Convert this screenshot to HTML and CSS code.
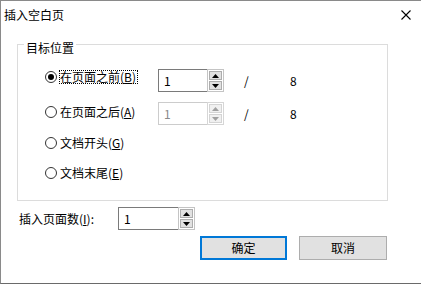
FILE: index.html
```html
<!DOCTYPE html>
<html lang="zh-CN">
<head>
<meta charset="utf-8">
<title>插入空白页</title>
<link rel="stylesheet" href="styles.css">
</head>
<body>
<div class="window">
  <div class="titlebar">
    <span class="title">插入空白页</span>
    <svg class="close" width="10" height="10" viewBox="0 0 10 10"><path d="M0.5 0.5L9.5 9.5M9.5 0.5L0.5 9.5" stroke="#000" stroke-width="1.1" fill="none"/></svg>
  </div>
  <div class="content">
    <div class="group">
      <span class="legend">目标位置</span>
      <div class="row row1">
        <label class="radio">
          <svg class="dot" width="12" height="12" viewBox="0 0 12 12"><circle cx="6" cy="6" r="5.5" fill="#fff" stroke="#333"/><circle cx="6" cy="6" r="3" fill="#000"/></svg>
          <span class="rtext focus">在页面之前(<u>B</u>)</span>
        </label>
        <div class="spin">
          <div class="spin-field">1</div>
          <div class="spin-btns">
            <div class="sbtn"><svg width="7" height="4" viewBox="0 0 7 4"><path d="M3.5 0L7 4H0z"/></svg></div>
            <div class="sbtn"><svg width="7" height="4" viewBox="0 0 7 4"><path d="M0 0H7L3.5 4z"/></svg></div>
          </div>
        </div>
        <span class="slash">/</span>
        <span class="total">8</span>
      </div>
      <div class="row row2">
        <label class="radio">
          <svg class="dot" width="12" height="12" viewBox="0 0 12 12"><circle cx="6" cy="6" r="5.5" fill="#fff" stroke="#333"/></svg>
          <span class="rtext">在页面之后(<u>A</u>)</span>
        </label>
        <div class="spin disabled">
          <div class="spin-field">1</div>
          <div class="spin-btns">
            <div class="sbtn"><svg width="7" height="4" viewBox="0 0 7 4"><path d="M3.5 0L7 4H0z"/></svg></div>
            <div class="sbtn"><svg width="7" height="4" viewBox="0 0 7 4"><path d="M0 0H7L3.5 4z"/></svg></div>
          </div>
        </div>
        <span class="slash">/</span>
        <span class="total">8</span>
      </div>
      <div class="row row3">
        <label class="radio">
          <svg class="dot" width="12" height="12" viewBox="0 0 12 12"><circle cx="6" cy="6" r="5.5" fill="#fff" stroke="#333"/></svg>
          <span class="rtext">文档开头(<u>G</u>)</span>
        </label>
      </div>
      <div class="row row4">
        <label class="radio">
          <svg class="dot" width="12" height="12" viewBox="0 0 12 12"><circle cx="6" cy="6" r="5.5" fill="#fff" stroke="#333"/></svg>
          <span class="rtext">文档末尾(<u>E</u>)</span>
        </label>
      </div>
    </div>
    <div class="count-row">
      <span class="count-label">插入页面数(<u>I</u>):</span>
      <div class="spin wide">
        <div class="spin-field">1</div>
        <div class="spin-btns">
          <div class="sbtn"><svg width="7" height="4" viewBox="0 0 7 4"><path d="M3.5 0L7 4H0z"/></svg></div>
          <div class="sbtn"><svg width="7" height="4" viewBox="0 0 7 4"><path d="M0 0H7L3.5 4z"/></svg></div>
        </div>
      </div>
    </div>
    <div class="button-row">
      <button class="btn primary">确定</button>
      <button class="btn">取消</button>
    </div>
  </div>
</div>
</body>
</html>
```

FILE: styles.css
```css
html, body {
  margin: 0;
  padding: 0;
  background: #fff;
}
body {
  font-family: "Noto Sans CJK SC", "Microsoft YaHei", sans-serif;
  font-size: 12px;
  color: #000;
}
.window {
  width: 421px;
  height: 284px;
  box-sizing: border-box;
  border-top: 1px solid #8a8a8a;
  border-left: 1px solid #8a8a8a;
  border-bottom: 1px solid #6a6a6a;
  background: #fff;
  overflow: hidden;
}
.titlebar {
  height: 28px;
  display: flex;
  align-items: center;
  justify-content: space-between;
  padding-left: 3px;
  padding-right: 10px;
}
.title {
  line-height: 14px;
}
.close {
  display: block;
}
.content {
  padding-left: 16px;
  padding-top: 15px;
}
.group {
  position: relative;
  width: 371px;
  height: 157px;
  box-sizing: border-box;
  border: 1px solid #dcdcdc;
  padding-left: 27px;
}
.legend {
  position: absolute;
  top: -3px;
  left: 6px;
  padding: 0 2px;
  background: #fff;
  line-height: 12px;
}
.row {
  display: flex;
  align-items: flex-start;
}
.row1 { margin-top: 24px; height: 23px; }
.row2 { margin-top: 10px; height: 23px; }
.row3 { margin-top: 11px; height: 14px; }
.row4 { margin-top: 16px; height: 14px; }
.radio {
  display: flex;
  align-items: center;
  width: 113px;
  height: 14px;
}
.row1 .radio { margin-top: 1px; }
.row2 .radio { margin-top: 3px; }
.dot {
  display: block;
  flex: none;
  margin-right: 2px;
}
.rtext {
  border: 1px dotted transparent;
  padding-right: 1px;
  line-height: 12px;
  white-space: nowrap;
}
.rtext.focus {
  border-color: #000;
}
u {
  text-decoration: underline;
  text-underline-offset: 1px;
}
.spin {
  display: flex;
  width: 66px;
  height: 23px;
  box-sizing: border-box;
}
.spin.wide {
  width: 77px;
}
.spin-field {
  flex: 1;
  border: 1px solid #7a7a7a;
  border-right: none;
  padding-left: 5px;
  display: flex;
  align-items: center;
  line-height: 12px;
}
.spin-btns {
  width: 17px;
  box-sizing: border-box;
  border: 1px solid #c4c4c4;
  padding: 1px;
  display: flex;
  flex-direction: column;
  gap: 1px;
}
.sbtn {
  flex: 1;
  background: #e1e1e1;
  border: 1px solid #adadad;
  display: flex;
  align-items: center;
  justify-content: center;
}
.sbtn svg {
  display: block;
  fill: #000;
}
.spin.disabled .spin-field {
  border-color: #cccccc;
  color: #8a8a8a;
}
.spin.disabled .spin-btns {
  border-color: #d6d6d6;
}
.spin.disabled .sbtn {
  background: #f0f0f0;
  border-color: #d4d4d4;
}
.spin.disabled .sbtn svg {
  fill: #a0a0a0;
}
.slash {
  align-self: center;
  margin-left: 20px;
  width: 46px;
  line-height: 12px;
}
.total {
  align-self: center;
  line-height: 12px;
}
.count-row {
  display: flex;
  align-items: center;
  margin-top: 6px;
  height: 23px;
}
.count-label {
  width: 99px;
  margin-left: 2px;
  line-height: 12px;
  white-space: nowrap;
}
.button-row {
  display: flex;
  margin-top: 6px;
  padding-left: 183px;
  gap: 12px;
}
.btn {
  width: 88px;
  height: 24px;
  box-sizing: border-box;
  background: #e1e1e1;
  border: 1px solid #adadad;
  font-family: inherit;
  font-size: 12px;
  color: #000;
  padding: 0;
  margin: 0;
  line-height: 12px;
}
.btn.primary {
  width: 87px;
  border: 2px solid #0078d7;
}
```
